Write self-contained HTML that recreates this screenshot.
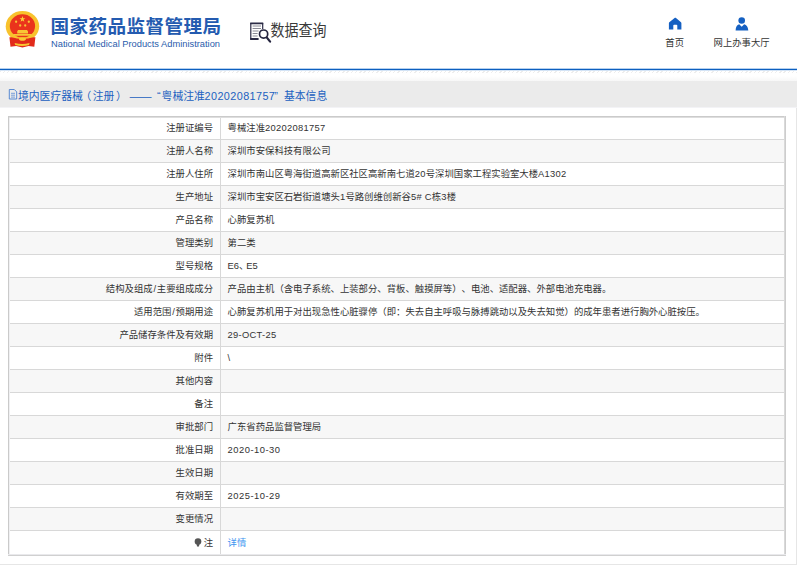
<!DOCTYPE html>
<html lang="zh-CN">
<head>
<meta charset="utf-8">
<title>国家药品监督管理局 数据查询</title>
<style>
html,body{margin:0;padding:0;}
body{width:797px;height:565px;overflow:hidden;background:#fff;position:relative;
 font-family:"Liberation Sans","Noto Sans CJK SC",sans-serif;color:#333;font-size:9.33px;
 text-spacing-trim:space-all;}
.abs{position:absolute;}
#hdr{position:absolute;left:0;top:0;width:797px;height:68px;background:#fff;}
#bl0{left:0;top:68px;width:797px;height:1px;background:#b5d0ee;}
#bl1{left:0;top:69px;width:797px;height:1px;background:#0c5fc0;}
#bl2{left:0;top:70px;width:797px;height:1px;background:#d3e3f5;}
#hatch{left:0;top:71px;width:797px;height:2px;opacity:.8;
 background:repeating-linear-gradient(135deg,#e9e9e9 0,#e9e9e9 1px,#fff 1px,#fff 3px);}
#fade{left:0;top:76px;width:797px;height:5px;background:linear-gradient(#fff,#f7f7f7);}
#emblem{position:absolute;left:0;top:5px;width:50px;height:50px;}
#cn{position:absolute;left:50.5px;top:12.8px;font-size:18.6px;font-weight:700;color:#245bb0;white-space:nowrap;line-height:28px;letter-spacing:0.4px;}
#en{position:absolute;left:51px;top:37.8px;font-size:9.3px;color:#2a5cab;white-space:nowrap;line-height:12px;}
#q{position:absolute;left:270.6px;top:20px;font-size:14px;color:#3a3a3a;white-space:nowrap;line-height:22px;transform:scaleY(1.1);transform-origin:0 18px;}
#qicon{position:absolute;left:240px;top:10px;width:40px;height:40px;}
.nav{position:absolute;font-size:9.33px;color:#333;white-space:nowrap;line-height:12px;}
#wrap{left:0;top:107px;width:796px;height:457px;border-right:1px solid #e6e6e6;border-bottom:1px solid #e6e6e6;box-sizing:content-box;}
#bar{left:0;top:81px;width:797px;height:26px;background:#ebebeb;}
#bar2{left:0;top:107px;width:797px;height:1px;background:#f3f3f6;}
.t{position:absolute;top:88.7px;font-size:10.8px;color:#1a5fc0;white-space:nowrap;line-height:14px;}
#tb{left:8px;top:116px;width:778px;height:440px;box-sizing:border-box;border:1px solid #cacaca;border-top:0;border-right:0;border-bottom:0;background:#fff;}
#tb .in{position:absolute;left:0;top:1px;width:1px;height:438px;background:#f0f0f2;}
#tb .rb{position:absolute;left:775px;top:0;width:1px;height:440px;background:#d9d9d9;}
#tb .rb2{position:absolute;left:776px;top:0;width:1px;height:440px;background:#cdcdcd;}
#tb .bb{position:absolute;left:-1px;top:438px;width:778px;height:1px;background:#e9e9ec;}
#tb .bb2{position:absolute;left:-1px;top:439px;width:778px;height:1px;background:#d0d0d0;}
#tb .tb2{position:absolute;left:0;top:1px;width:775px;height:1px;background:#dedede;}
.r{position:absolute;left:0;width:775px;height:22px;border-top:1px solid #d8d8d8;line-height:22px;white-space:nowrap;font-size:9.37px;}
.r.g{background:#f7f7f7;}
.r.f{border-top-color:#cbcbcb}
.r b{font-weight:400;position:absolute;right:571px;top:0;}
.r i{font-style:normal;position:absolute;left:218.6px;top:0;}
.d{letter-spacing:0.28px}
.sl{margin:0 0.8px}
.dt{letter-spacing:0.5px}
.r u{position:absolute;left:211px;top:0;width:1px;height:23px;background:#d8d8d8;}
a{color:#3d95f0;text-decoration:none;}
</style>
</head>
<body>
<div id="hdr">
 <svg id="emblem" viewBox="0 0 50 50">
  <ellipse cx="22.45" cy="21.3" rx="16.75" ry="15.3" fill="#f8c22c"/>
  <ellipse cx="22.45" cy="21" rx="12.65" ry="11.8" fill="#ea331c"/>
  <path d="M9.4 32.2 L35.4 32.2 L34.3 41.7 L28.6 41 L22.4 42.4 L16.2 41 L10.5 41.7 Z" fill="#e22a1a"/>
  <path d="M11.8 30.6 Q22.45 34.6 33.1 30.6 L33.6 32 Q22.45 36 11.3 32 Z" fill="#f8c42e"/>
  <ellipse cx="22.45" cy="34" rx="3.5" ry="1.8" fill="#f9c934"/>
  <path d="M14.6 37.9 Q22.4 40.2 29.6 37.9 L29 40.1 Q22.4 42 15.2 40.1 Z" fill="#f8c630"/>
  <polygon fill="#fbd23a" points="22.45,11.1 23.2,13.2 25.4,13.2 23.6,14.55 24.3,16.7 22.45,15.4 20.6,16.7 21.3,14.55 19.5,13.2 21.7,13.2"/>
  <circle cx="16.1" cy="16.75" r="1.15" fill="#f7c236"/>
  <circle cx="28.8" cy="16.75" r="1.15" fill="#f7c236"/>
  <circle cx="20.2" cy="20.5" r="1.15" fill="#f7c236"/>
  <circle cx="25.2" cy="20.5" r="1.15" fill="#f7c236"/>
  <path d="M18 25 H27 L28 26.6 V28.4 H17.2 V26.6 Z M13.2 29 H31.7 V30.7 H13.2 Z" fill="#f8c634"/>
 </svg>
 <div id="cn">国家药品监督管理局</div>
 <div id="en">National Medical Products Administration</div>
 <svg id="qicon" viewBox="0 0 40 40">
  <path d="M10.2 13.4 H23.2 M10.2 29 H18.6" fill="none" stroke="#2b2b45" stroke-width="1.8"/>
  <path d="M10.8 13 V29.4 M22.7 13 V19" fill="none" stroke="#2b2b45" stroke-width="1.2"/>
  <path d="M12.6 16 H21 M12.6 18.5 H21 M12.6 21 H18.6 M12.6 23.5 H17.6 M12.6 26 H17.6" stroke="#8a8a95" stroke-width="1"/>
  <circle cx="23.6" cy="24.1" r="4.1" fill="#fff" stroke="#25253f" stroke-width="1.7"/>
  <path d="M26.9 27.6 L30.1 31.6" stroke="#25253f" stroke-width="2.2" stroke-linecap="round"/>
 </svg>
 <div id="q">数据查询</div>
 <svg class="abs" style="left:660px;top:10px;width:30px;height:24px" viewBox="0 0 30 24">
  <path d="M14.9 7.8 Q15.3 7.5 15.7 7.8 L21 12.3 Q21.4 12.7 21.4 13.2 V19.6 H17.3 V15.6 Q17.3 14.8 16.5 14.8 H14.1 Q13.3 14.8 13.3 15.6 V19.6 H8.9 V13.2 Q8.9 12.7 9.3 12.3 Z" fill="#1560c2"/>
 </svg>
 <div class="nav" style="left:665.300px;top:36.500px">首页</div>
 <svg class="abs" style="left:726px;top:10px;width:30px;height:24px" viewBox="0 0 30 24">
  <circle cx="15.7" cy="10.5" r="3.3" fill="#1560c2"/>
  <path d="M9.6 20.6 Q9.8 15 13.2 14.3 L15.7 16.8 L18.2 14.3 Q21.8 15 22.3 20.6 Z" fill="#1560c2"/>
 </svg>
 <div class="nav" style="left:713.600px;top:36.500px">网上办事大厅</div>
</div>
<div class="abs" id="bl0"></div><div class="abs" id="bl1"></div><div class="abs" id="bl2"></div>
<div class="abs" id="hatch"></div>
<div class="abs" id="fade"></div>
<div class="abs" id="wrap"></div>
<div class="abs" id="bar"></div><div class="abs" id="bar2"></div>
<svg class="abs" style="left:8px;top:88px;width:11px;height:13px" viewBox="0 0 11 13">
 <path d="M1.3 1.5 H6.3 L8.7 3.9 V11 H1.3 Z" fill="none" stroke="#4a7fd0" stroke-width="0.9"/>
 <path d="M3 5.3 H7 M3 7.2 H7 M3 9.1 H7" stroke="#5a8ad6" stroke-width="0.8"/>
</svg>
<span class="t" style="left:18px">境内医疗器械</span>
<span class="t" style="left:80.500px">（</span>
<span class="t" style="left:92.700px">注册</span>
<span class="t" style="left:116px">）</span>
<span class="t" style="left:128.8px;font-family:'Noto Sans CJK SC',sans-serif;transform:scaleX(1.28);transform-origin:0 0">——</span>
<span class="t" style="left:157px">“</span>
<span class="t" style="left:161.600px">粤械注准</span>
<span class="t" style="left:204.6px;letter-spacing:0.42px">20202081757</span>
<span class="t" style="left:274.3px">”</span>
<span class="t" style="left:284px">基本信息</span>
<div class="abs" id="tb">
<div class="r f" style="top:0"><b>注册证编号</b><u></u><i>粤械注准<span class="d">20202081757</span></i></div>
<div class="r g" style="top:23px"><b>注册人名称</b><u></u><i>深圳市安保科技有限公司</i></div>
<div class="r" style="top:46px"><b>注册人住所</b><u></u><i>深圳市南山区粤海街道高新区社区高新南七道<span class="d">20</span>号深圳国家工程实验室大楼<span class="d">A1302</span></i></div>
<div class="r g" style="top:69px"><b>生产地址</b><u></u><i>深圳市宝安区石岩街道塘头<span class="d">1</span>号路创维创新谷<span class="d">5# C</span>栋<span class="d">3</span>楼</i></div>
<div class="r" style="top:92px"><b>产品名称</b><u></u><i>心肺复苏机</i></div>
<div class="r g" style="top:115px"><b>管理类别</b><u></u><i>第二类</i></div>
<div class="r" style="top:138px"><b>型号规格</b><u></u><i>E6<span style="margin-right:-2.2px">、</span>E5</i></div>
<div class="r g" style="top:161px"><b>结构及组成<span class="sl">/</span>主要组成成分</b><u></u><i>产品由主机（含电子系统、上装部分、背板、触摸屏等）、电池、适配器、外部电池充电器。</i></div>
<div class="r" style="top:184px"><b>适用范围<span class="sl">/</span>预期用途</b><u></u><i>心肺复苏机用于对出现急性心脏骤停（即：失去自主呼吸与脉搏跳动以及失去知觉）的成年患者进行胸外心脏按压。</i></div>
<div class="r g" style="top:207px"><b>产品储存条件及有效期</b><u></u><i><span class="d">29-OCT-25</span></i></div>
<div class="r" style="top:230px"><b>附件</b><u></u><i>\</i></div>
<div class="r g" style="top:253px"><b>其他内容</b><u></u><i></i></div>
<div class="r" style="top:276px"><b>备注</b><u></u><i></i></div>
<div class="r g" style="top:299px"><b>审批部门</b><u></u><i>广东省药品监督管理局</i></div>
<div class="r" style="top:322px"><b>批准日期</b><u></u><i><span class="dt">2020-10-30</span></i></div>
<div class="r g" style="top:345px"><b>生效日期</b><u></u><i></i></div>
<div class="r" style="top:368px"><b>有效期至</b><u></u><i><span class="dt">2025-10-29</span></i></div>
<div class="r g" style="top:391px"><b>变更情况</b><u></u><i></i></div>
<div class="r" style="top:414px;height:24px;line-height:24px"><b><svg style="position:absolute;left:-9.6px;top:7.3px;width:8px;height:10px" viewBox="0 0 8 10"><circle cx="4" cy="3.6" r="3.3" fill="#555"/><path d="M2.6 6 H5.4 L5 8.6 H3 Z" fill="#555"/></svg>注</b><u></u><i><a>详情</a></i></div>
<div class="in"></div><div class="tb2"></div><div class="rb"></div><div class="rb2"></div><div class="bb"></div><div class="bb2"></div>
</div>
</body>
</html>
